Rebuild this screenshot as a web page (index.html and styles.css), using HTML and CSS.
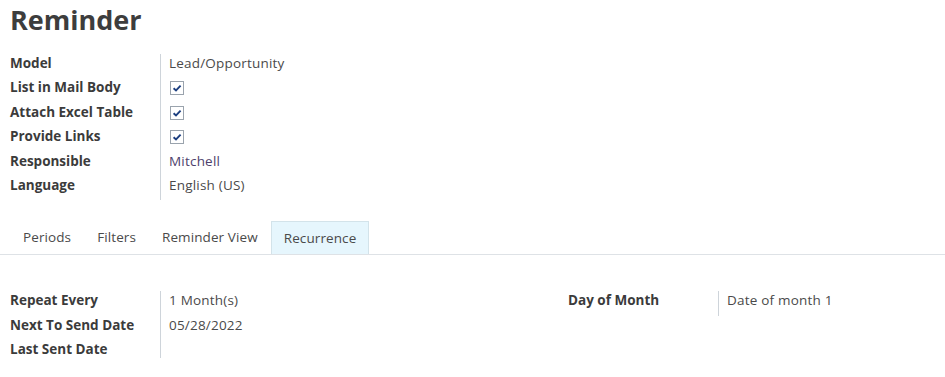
FILE: index.html
```html
<!DOCTYPE html>
<html>
<head>
<meta charset="utf-8">
<link rel="stylesheet" href="styles.css">
</head>
<body>
<div class="sheet">
  <h1 class="title">Reminder</h1>
  <div class="group">
    <div class="label">Model</div><div class="value">Lead/Opportunity</div>
    <div class="label">List in Mail Body</div><div class="value"><span class="check"><svg viewBox="0 0 12 12" width="12" height="12"><path d="M2.6 6.2 L5 8.4 L9.6 3.6" fill="none" stroke="#1d3f80" stroke-width="1.9"/></svg></span></div>
    <div class="label">Attach Excel Table</div><div class="value"><span class="check"><svg viewBox="0 0 12 12" width="12" height="12"><path d="M2.6 6.2 L5 8.4 L9.6 3.6" fill="none" stroke="#1d3f80" stroke-width="1.9"/></svg></span></div>
    <div class="label">Provide Links</div><div class="value"><span class="check"><svg viewBox="0 0 12 12" width="12" height="12"><path d="M2.6 6.2 L5 8.4 L9.6 3.6" fill="none" stroke="#1d3f80" stroke-width="1.9"/></svg></span></div>
    <div class="label">Responsible</div><div class="value link">Mitchell</div>
    <div class="label">Language</div><div class="value">English (US)</div>
  </div>
  <div class="tabs">
    <div class="tab">Periods</div>
    <div class="tab">Filters</div>
    <div class="tab">Reminder View</div>
    <div class="tab active">Recurrence</div>
  </div>
  <div class="pane">
    <div class="group col">
      <div class="label">Repeat Every</div><div class="value">1 Month(s)</div>
      <div class="label">Next To Send Date</div><div class="value">05/28/2022</div>
      <div class="label last">Last Sent Date</div><div class="value last"></div>
    </div>
    <div class="group col">
      <div class="label">Day of Month</div><div class="value">Date of month 1</div>
    </div>
  </div>
</div>
</body>
</html>
```
FILE: styles.css
```css
html, body {
  margin: 0;
  padding: 0;
  background: #ffffff;
}
body {
  font-family: "Open Sans", "Noto Sans", sans-serif;
  font-size: 13.5px;
  color: #4a4a4a;
}
.title {
  margin: 0;
  padding: 2px 10px 0 10px;
  font-size: 27px;
  line-height: 36px;
  font-weight: 700;
  color: #3d3d3d;
}
.group {
  display: grid;
  grid-template-columns: 150px 1fr;
  margin: 16px 10px 0 10px;
}
.label {
  font-weight: 700;
  color: #3b3b3b;
  height: 24.4px;
  line-height: 18px;
}
.value {
  border-left: 1px solid #ced4da;
  padding-left: 8px;
  height: 24.4px;
  line-height: 18px;
  letter-spacing: 0.2px;
  display: flex;
  align-items: flex-start;
}
.label.last,
.value.last {
  height: 18px;
}
.link {
  color: #4e3f6c;
}
.check {
  margin-top: 3px;
  margin-left: 1px;
  width: 12px;
  height: 12px;
  border: 1px solid #9aa3ad;
  display: inline-flex;
  align-items: center;
  justify-content: center;
}
.tabs {
  display: flex;
  margin-top: 21px;
  padding-left: 10px;
  border-bottom: 1px solid #dee2e6;
  height: 33px;
}
.tab {
  padding: 0 13px;
  line-height: 33px;
  letter-spacing: 0.1px;
  color: #4a4a4a;
}
.tab.active {
  background: #e6f6fd;
  border: 1px solid #d3e3ea;
  border-bottom: none;
  padding: 0 12px;
  line-height: 32px;
}
.pane {
  display: flex;
  padding: 36px 10px 0 10px;
}
.pane .group {
  margin: 0;
}
.pane .col {
  flex: 0 0 558px;
}
.pane .col + .col {
  flex: 1;
}
```
